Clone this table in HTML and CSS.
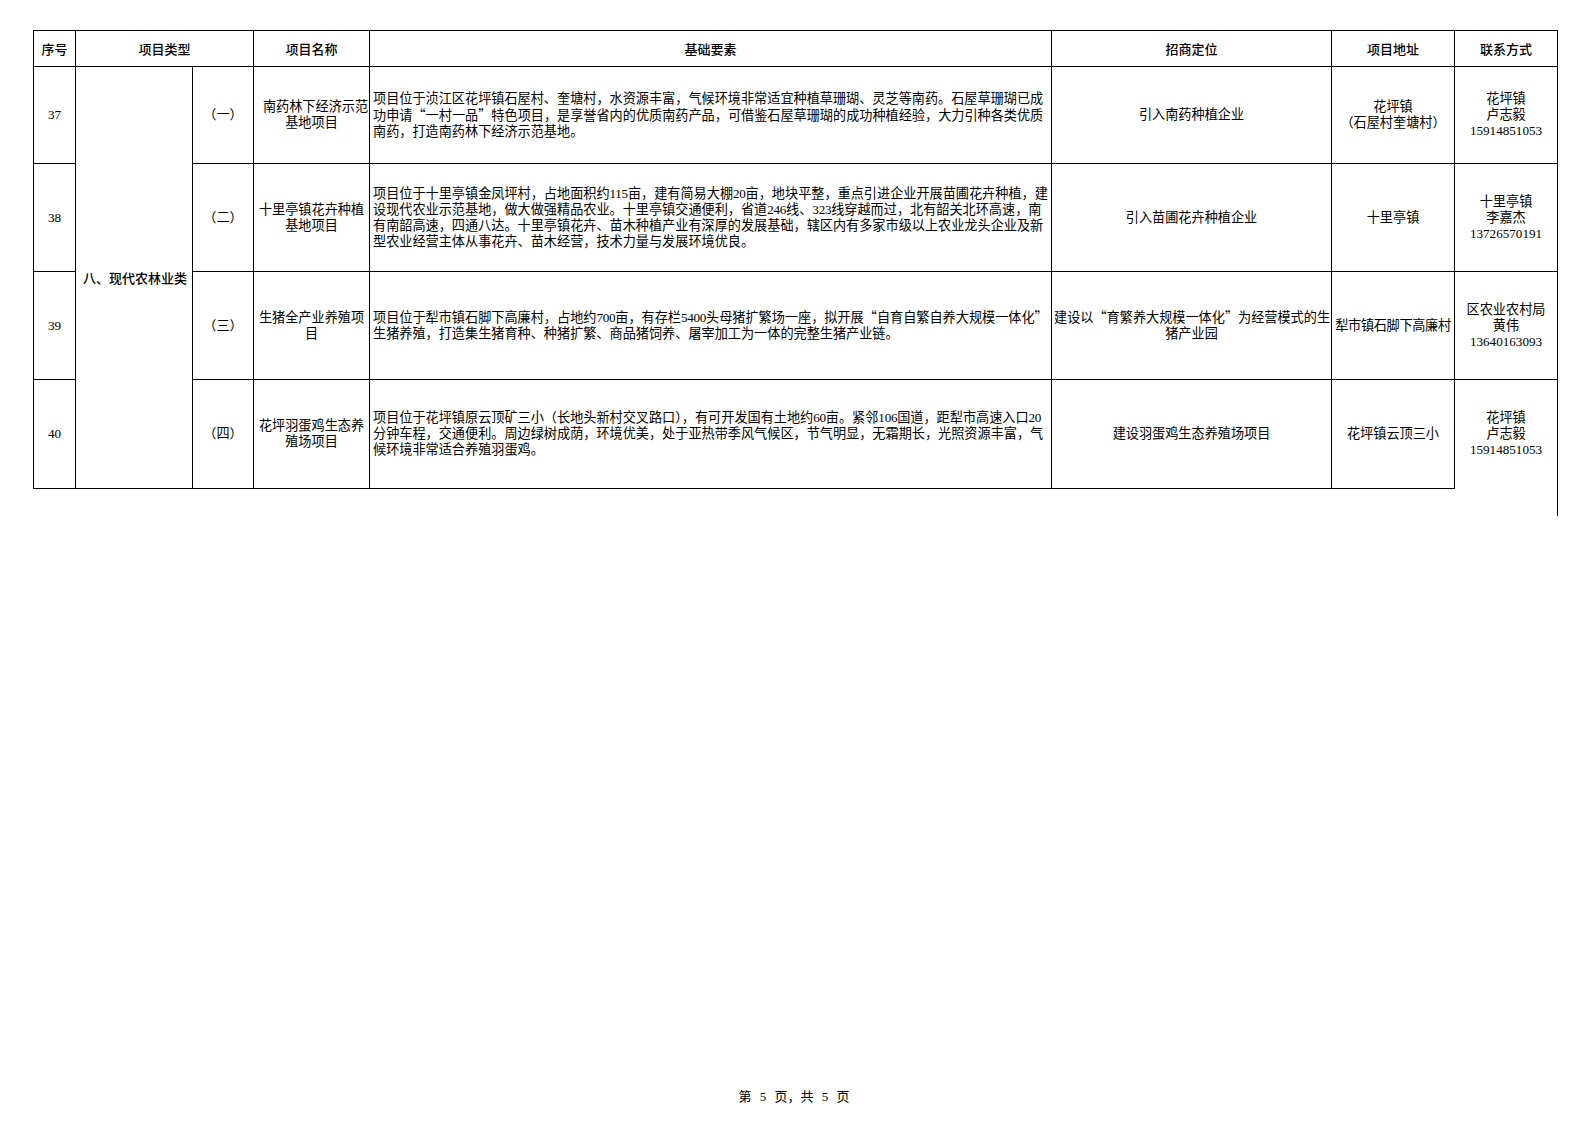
FILE: index.html
```html
<!DOCTYPE html>
<html lang="zh-CN">
<head>
<meta charset="utf-8">
<title>第 5 页</title>
<link rel="stylesheet" href="styles.css">
</head>
<body>
<div class="page">
  <div class="sheet">
    <table class="grid">
      <colgroup>
        <col class="c-no">
        <col class="c-type">
        <col class="c-sub">
        <col class="c-name">
        <col class="c-desc">
        <col class="c-pos">
        <col class="c-addr">
        <col class="c-contact">
      </colgroup>
      <thead>
        <tr class="r-head">
          <th>序号</th>
          <th colspan="2">项目类型</th>
          <th>项目名称</th>
          <th>基础要素</th>
          <th>招商定位</th>
          <th>项目地址</th>
          <th>联系方式</th>
        </tr>
      </thead>
      <tbody>
        <tr class="r-37">
          <td class="num">37</td>
          <td class="cat" rowspan="4">八、现代农林业类</td>
          <td>（一）</td>
          <td class="name"><span class="push">南药林下经济示范</span><br>基地项目</td>
          <td class="desc">项目位于浈江区花坪镇石屋村、奎塘村，水资源丰富，气候环境非常适宜种植草珊瑚、灵芝等南药。石屋草珊瑚已成<br>功申请<span class="q">“</span>一村一品<span class="q">”</span>特色项目，是享誉省内的优质南药产品，可借鉴石屋草珊瑚的成功种植经验，大力引种各类优质<br>南药，打造南药林下经济示范基地。</td>
          <td>引入南药种植企业</td>
          <td>花坪镇<br>（石屋村奎塘村）</td>
          <td>花坪镇<br>卢志毅<br><span class="num">15914851053</span></td>
        </tr>
        <tr class="r-38">
          <td class="num">38</td>
          <td>（二）</td>
          <td class="name">十里亭镇花卉种植<br>基地项目</td>
          <td class="desc">项目位于十里亭镇金凤坪村，占地面积约<span class="d">115</span>亩，建有简易大棚<span class="d">20</span>亩，地块平整，重点引进企业开展苗圃花卉种植，建<br>设现代农业示范基地，做大做强精品农业。十里亭镇交通便利，省道<span class="d">246</span>线、<span class="d">323</span>线穿越而过，北有韶关北环高速，南<br>有南韶高速，四通八达。十里亭镇花卉、苗木种植产业有深厚的发展基础，辖区内有多家市级以上农业龙头企业及新<br>型农业经营主体从事花卉、苗木经营，技术力量与发展环境优良。</td>
          <td>引入苗圃花卉种植企业</td>
          <td>十里亭镇</td>
          <td>十里亭镇<br>李嘉杰<br><span class="num">13726570191</span></td>
        </tr>
        <tr class="r-39">
          <td class="num">39</td>
          <td>（三）</td>
          <td class="name">生猪全产业养殖项<br>目</td>
          <td class="desc">项目位于犁市镇石脚下高廉村，占地约<span class="d">700</span>亩，有存栏<span class="d">5400</span>头母猪扩繁场一座，拟开展<span class="q">“</span>自育自繁自养大规模一体化<span class="q">”</span><br>生猪养殖，打造集生猪育种、种猪扩繁、商品猪饲养、屠宰加工为一体的完整生猪产业链。</td>
          <td>建设以<span class="q">“</span>育繁养大规模一体化<span class="q">”</span>为经营模式的生<br>猪产业园</td>
          <td class="tight">犁市镇石脚下高廉村</td>
          <td>区农业农村局<br>黄伟<br><span class="num">13640163093</span></td>
        </tr>
        <tr class="r-40">
          <td class="num">40</td>
          <td>（四）</td>
          <td class="name">花坪羽蛋鸡生态养<br>殖场项目</td>
          <td class="desc">项目位于花坪镇原云顶矿三小（长地头新村交叉路口），有可开发国有土地约<span class="d">60</span>亩。紧邻<span class="d">106</span>国道，距犁市高速入口<span class="d">20</span><br>分钟车程，交通便利。周边绿树成荫，环境优美，处于亚热带季风气候区，节气明显，无霜期长，光照资源丰富，气<br>候环境非常适合养殖羽蛋鸡。</td>
          <td>建设羽蛋鸡生态养殖场项目</td>
          <td>花坪镇云顶三小</td>
          <td class="open">花坪镇<br>卢志毅<br><span class="num">15914851053</span></td>
        </tr>
      </tbody>
    </table>
  </div>
  <div class="footer">第 5 页，共 5 页</div>
</div>
</body>
</html>
```
FILE: styles.css
```css
html, body {
  margin: 0;
  padding: 0;
  background: #fff;
}

.page {
  width: 1588px;
  height: 1123px;
  display: flex;
  flex-direction: column;
  color: #000;
  font-family: "Liberation Serif", "Noto Sans CJK SC", serif;
}

.sheet {
  padding: 30px 0 0 33px;
}

.grid {
  border-collapse: collapse;
  table-layout: fixed;
  width: 1524px;
}

.c-no { width: 42px; }
.c-type { width: 117px; }
.c-sub { width: 61px; }
.c-name { width: 116px; }
.c-desc { width: 682px; }
.c-pos { width: 280px; }
.c-addr { width: 123px; }
.c-contact { width: 103px; }

.grid th,
.grid td {
  border: 1px solid #000;
  padding: 0 2px;
  text-align: center;
  vertical-align: middle;
  font-size: 13.15px;
  line-height: 16px;
  white-space: nowrap;
  overflow: visible;
}

.grid th {
  font-family: "Noto Sans CJK SC", sans-serif;
  font-weight: 500;
  font-size: 13px;
  height: 35px;
}

.r-37 td { height: 96px; }
.r-38 td { height: 107px; }
.r-39 td { height: 107px; }
.r-40 td { height: 108px; }

.grid td.cat {
  font-family: "Noto Sans CJK SC", sans-serif;
  font-weight: 500;
  font-size: 13px;
  text-align: right;
  padding-right: 5px;
}

.grid td.desc {
  text-align: left;
  padding: 0 2px 0 3px;
}

.d {
  letter-spacing: -0.3px;
}

.q {
  font-family: "Noto Sans CJK SC", sans-serif;
  font-feature-settings: "fwid";
}

.grid td.name {
  padding: 0;
}

.push {
  position: relative;
  left: 4px;
}

.grid td.tight {
  padding: 0;
  letter-spacing: -0.3px;
}

.num {
  font-family: "Liberation Serif", serif;
}

.grid td.open {
  border-bottom: none;
  position: relative;
}

.grid td.open::after {
  content: "";
  position: absolute;
  right: -1px;
  top: 100%;
  height: 27px;
  border-right: 1px solid #000;
}

.footer {
  margin-top: auto;
  padding-bottom: 18px;
  text-align: center;
  font-size: 13px;
  line-height: 16px;
  word-spacing: 5px;
  font-family: "Liberation Serif", "Noto Sans CJK SC", serif;
}
```
